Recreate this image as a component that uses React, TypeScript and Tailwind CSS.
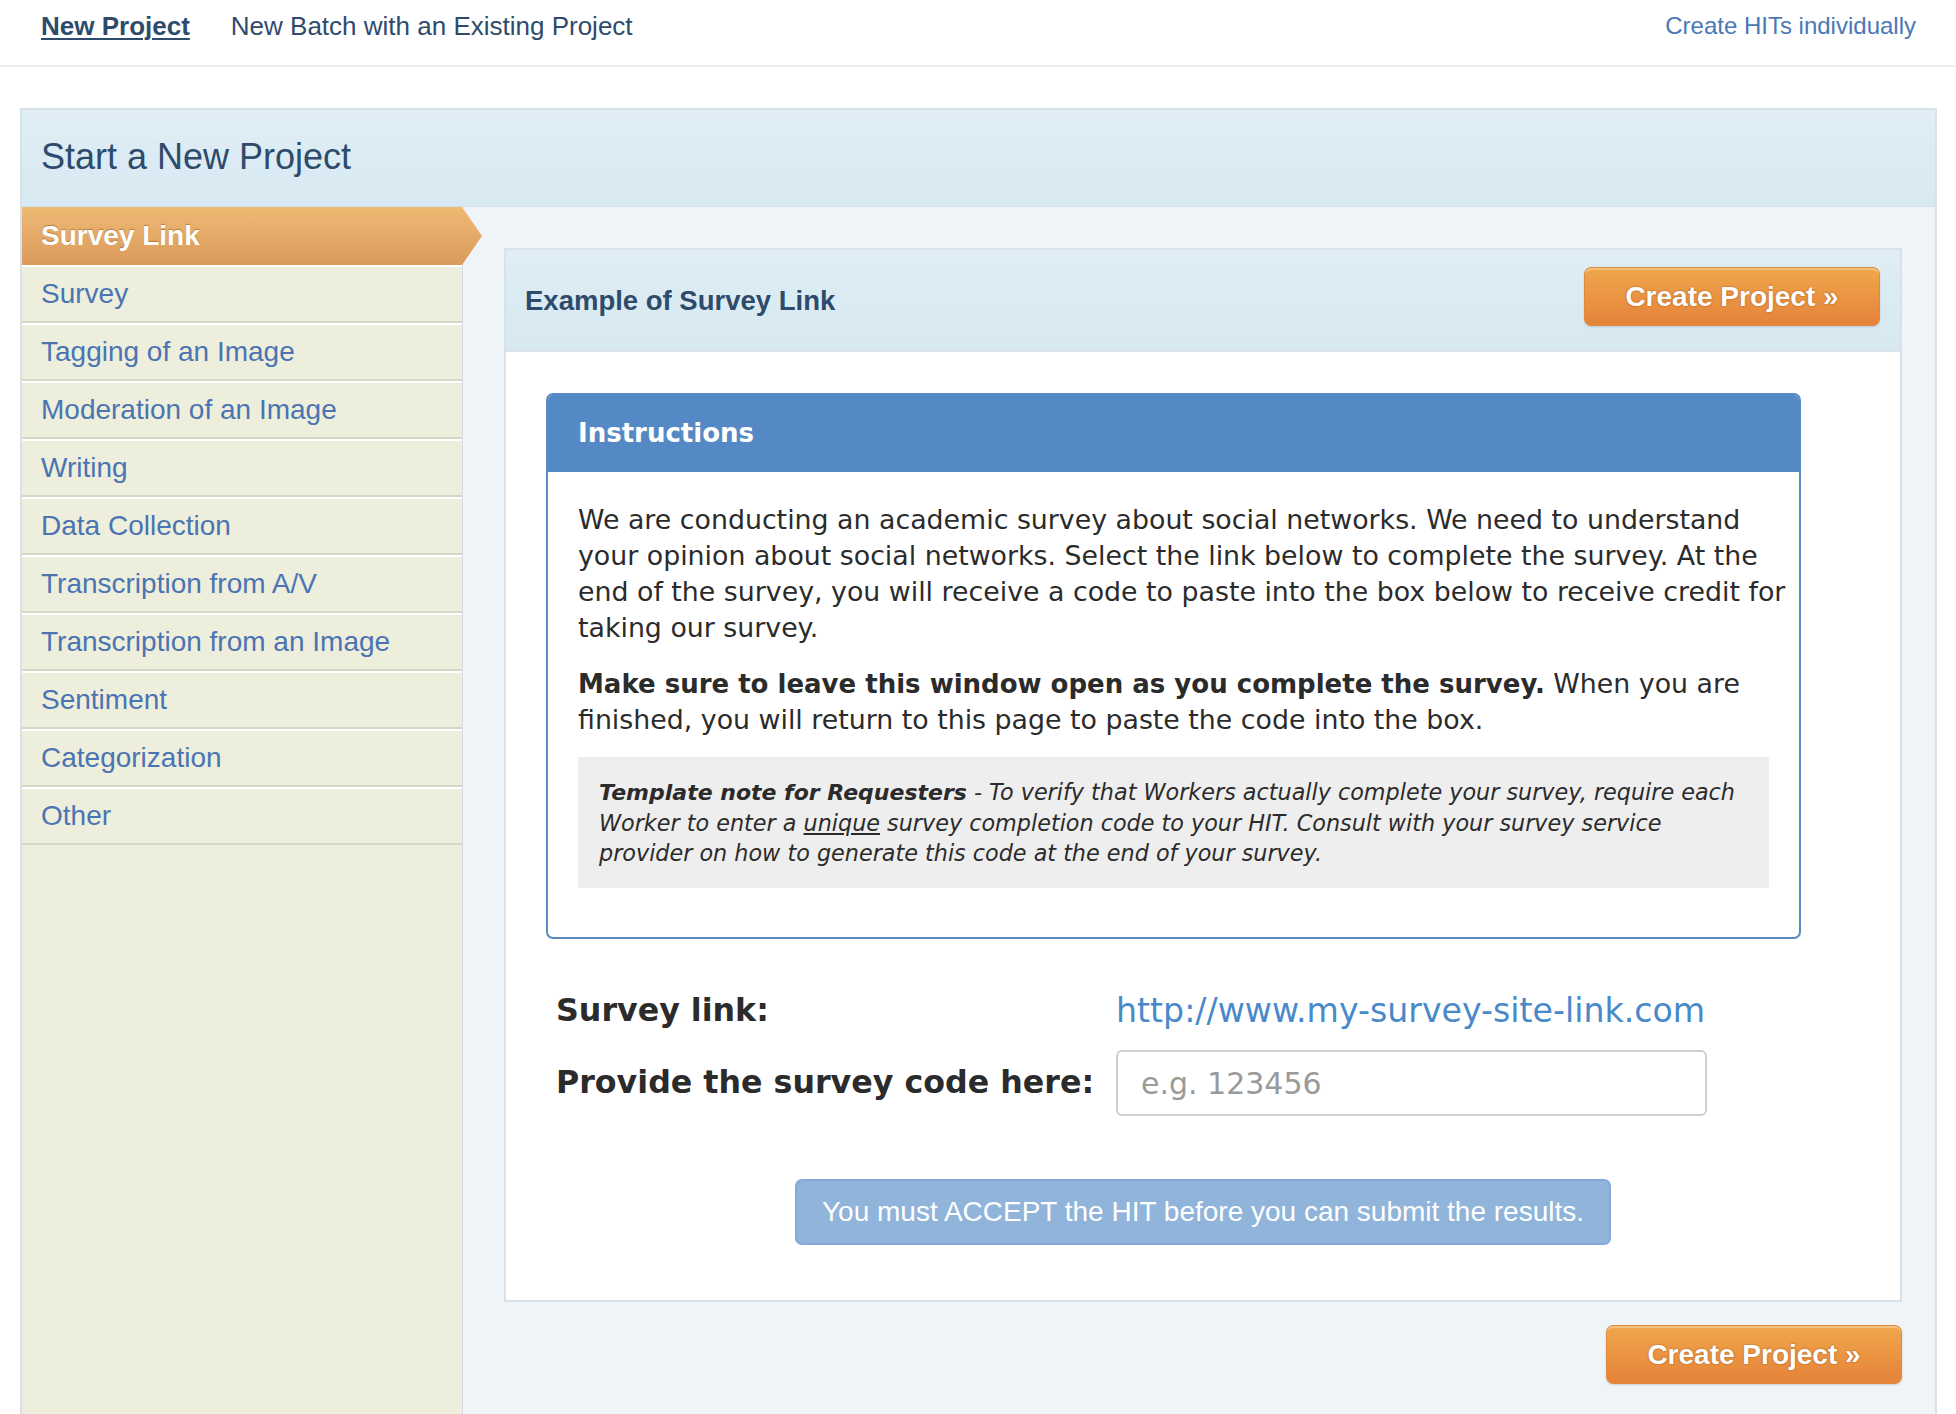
const categories = [
  'Survey Link',
  'Survey',
  'Tagging of an Image',
  'Moderation of an Image',
  'Writing',
  'Data Collection',
  'Transcription from A/V',
  'Transcription from an Image',
  'Sentiment',
  'Categorization',
  'Other',
]

function CreateButton() {
  return (
    <button className="w-[296px] h-[59px] rounded-[7px] border border-[#df8a3e] bg-gradient-to-b from-[#efa74b] to-[#e5823a] shadow-[inset_0_2px_0_rgba(255,255,255,0.3),0_1px_2px_rgba(0,0,0,0.15)] text-white font-bold text-[28px] [text-shadow:0_0_2px_#9c5418]">
      Create Project »
    </button>
  )
}

export default function App() {
  return (
    <div className="min-h-screen bg-white font-['Liberation_Sans',Arial,sans-serif]">
      {/* top nav */}
      <div className="h-[67px] flex items-center justify-between pl-[41px] pr-[40px] border-b-2 border-[#ededed]">
        <div className="flex items-center gap-[41px] text-[26px] text-[#2e4b6c] -mt-[12px]">
          <a className="font-bold underline underline-offset-[3px] decoration-2">New Project</a>
          <a>New Batch with an Existing Project</a>
        </div>
        <a className="text-[24px] text-[#4a78b5] -mt-[14px]">Create HITs individually</a>
      </div>

      <div className="pt-[41px] pl-[20px] pr-[19px]">
        <div className="border-2 border-b-0 border-[#d7e1e8]">
          {/* panel header */}
          <div className="h-[97px] flex items-center px-[19px] bg-gradient-to-b from-[#e1eef5] to-[#d7e9f2] border-b border-[#d2dfe7]">
            <h1 className="text-[36px] text-[#2e4b6c] -mt-[2px]">Start a New Project</h1>
          </div>

          <div className="flex">
            {/* sidebar */}
            <aside className="w-[441px] shrink-0 bg-[#eeeedd] border-r border-[#d6dde2] relative z-10 min-h-[1220px]">
              {categories.map((c, i) =>
                i === 0 ? (
                  <div
                    key={c}
                    className="w-[460px] h-[58px] flex items-center pl-[19px] bg-gradient-to-b from-[#edba74] to-[#db9a5b] text-white font-bold text-[28px] [text-shadow:0_-1px_1px_rgba(120,60,10,0.45)] [clip-path:polygon(0_0,calc(100%_-_20px)_0,100%_50%,calc(100%_-_20px)_100%,0_100%)]"
                  >
                    {c}
                  </div>
                ) : (
                  <div
                    key={c}
                    className="h-[58px] flex items-center pl-[19px] border-t-2 border-t-white border-b-2 border-b-[#d7d7c8] text-[28px] text-[#4a74b2]"
                  >
                    {c}
                  </div>
                )
              )}
            </aside>

            {/* content */}
            <div className="flex-1 bg-[#eff4f8] pl-[41px] pr-[33px] pt-[41px] pb-[40px]">
              <div className="border-2 border-[#d9e2e8] bg-white">
                <div className="h-[102px] flex items-center justify-between pl-[19px] pr-[20px] bg-gradient-to-b from-[#dfeef5] to-[#d7e8f0] border-b-2 border-[#d8e2e8]">
                  <h2 className="font-bold text-[27.5px] text-[#2e4b6c] pt-[2px]">Example of Survey Link</h2>
                  <div className="-mt-[7px]">
                    <CreateButton />
                  </div>
                </div>

                <div className="pt-[41px] pb-[55px] font-['DejaVu_Sans',Verdana,sans-serif] text-[#2b2b2b]">
                  {/* instructions */}
                  <div className="ml-[40px] w-[1255px] border-2 border-[#5a8ac6] rounded-[7px] overflow-hidden">
                    <div className="h-[77px] flex items-center pl-[30px] bg-[#5589c5] text-white font-bold text-[26px]">
                      Instructions
                    </div>
                    <div className="pl-[30px] pr-[30px] pt-[30px] pb-[49px]">
                      <p className="text-[26.8px] leading-[36px] mb-[20px] -mr-[24px]">
                        We are conducting an academic survey about social networks. We need to understand your opinion
                        about social networks. Select the link below to complete the survey. At the end of the survey,
                        you will receive a code to paste into the box below to receive credit for taking our survey.
                      </p>
                      <p className="text-[26.8px] leading-[36px] mb-[19px]">
                        <b className="text-[26px]">Make sure to leave this window open as you complete the survey.</b>{' '}
                        When you are finished, you will return to this page to paste the code into the box.
                      </p>
                      <div className="bg-[#eeeeee] px-[21px] py-[20px] text-[22.3px] leading-[30px] italic">
                        <b className="text-[22px]">Template note for Requesters</b> - To verify that Workers actually
                        complete your survey, require each Worker to enter a <u>unique</u> survey completion code to
                        your HIT. Consult with your survey service provider on how to generate this code at the end of
                        your survey.
                      </div>
                    </div>
                  </div>

                  {/* form */}
                  <div className="ml-[50px] mt-[50px]">
                    <div className="h-[44px] flex items-center">
                      <span className="w-[560px] font-bold text-[31.7px]">Survey link:</span>
                      <a className="text-[33.2px] text-[#4a89c9]">http://www.my-survey-site-link.com</a>
                    </div>
                    <div className="mt-[17px] flex items-center">
                      <span className="w-[560px] font-bold text-[31.7px]">Provide the survey code here:</span>
                      <input
                        placeholder="e.g. 123456"
                        className="w-[591px] h-[66px] border-2 border-[#cfcfcf] rounded-[6px] px-[23px] text-[30px] placeholder:text-[#9a9a9a] outline-none"
                      />
                    </div>
                  </div>

                  <div className="mt-[63px] flex justify-center">
                    <button className="w-[816px] h-[66px] rounded-[7px] border-2 border-[#84a9d5] bg-[#90b4da] text-white text-[28px] font-['Liberation_Sans',Arial,sans-serif]">
                      You must ACCEPT the HIT before you can submit the results.
                    </button>
                  </div>
                </div>
              </div>

              <div className="mt-[23px] flex justify-end">
                <CreateButton />
              </div>
            </div>
          </div>
        </div>
      </div>
    </div>
  )
}
